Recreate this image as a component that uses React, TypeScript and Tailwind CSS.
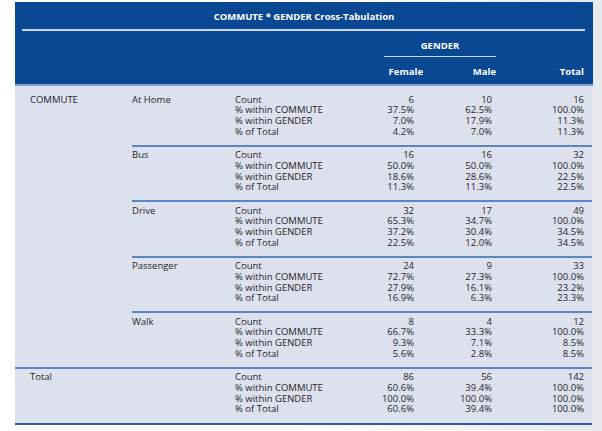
import React from "react";

type Group = { name: string; rows: string[][] };

const labels = ["Count", "% within COMMUTE", "% within GENDER", "% of Total"];

const groups: Group[] = [
  { name: "At Home", rows: [["6", "10", "16"], ["37.5%", "62.5%", "100.0%"], ["7.0%", "17.9%", "11.3%"], ["4.2%", "7.0%", "11.3%"]] },
  { name: "Bus", rows: [["16", "16", "32"], ["50.0%", "50.0%", "100.0%"], ["18.6%", "28.6%", "22.5%"], ["11.3%", "11.3%", "22.5%"]] },
  { name: "Drive", rows: [["32", "17", "49"], ["65.3%", "34.7%", "100.0%"], ["37.2%", "30.4%", "34.5%"], ["22.5%", "12.0%", "34.5%"]] },
  { name: "Passenger", rows: [["24", "9", "33"], ["72.7%", "27.3%", "100.0%"], ["27.9%", "16.1%", "23.2%"], ["16.9%", "6.3%", "23.3%"]] },
  { name: "Walk", rows: [["8", "4", "12"], ["66.7%", "33.3%", "100.0%"], ["9.3%", "7.1%", "8.5%"], ["5.6%", "2.8%", "8.5%"]] },
];

const total: string[][] = [["86", "56", "142"], ["60.6%", "39.4%", "100.0%"], ["100.0%", "100.0%", "100.0%"], ["60.6%", "39.4%", "100.0%"]];

function Stats({ rows }: { rows: string[][] }) {
  return (
    <>
      <div className="w-[105px]">
        {labels.map((l) => (
          <div key={l}>{l}</div>
        ))}
      </div>
      <div className="w-[74px] text-right">
        {rows.map((r, i) => (
          <div key={i}>{r[0]}</div>
        ))}
      </div>
      <div className="w-[78px] text-right">
        {rows.map((r, i) => (
          <div key={i}>{r[1]}</div>
        ))}
      </div>
      <div className="w-[92px] text-right">
        {rows.map((r, i) => (
          <div key={i}>{r[2]}</div>
        ))}
      </div>
    </>
  );
}

export default function App() {
  return (
    <div
      className="w-[602px] h-[431px] overflow-hidden bg-linear-to-r from-white via-white to-[#e6e9ee] pt-[2px]"
      style={{ fontFamily: '"Open Sans", "Noto Sans", sans-serif' }}
    >
      <div className="ml-[15px] w-[578px]">
        {/* Header */}
        <div className="h-[82px] bg-[#0a4894] text-white font-bold flex flex-col">
          <div className="mt-[9px] text-center text-[9.5px] leading-[12px]">COMMUTE * GENDER Cross-Tabulation</div>
          <div className="mt-[6px] ml-[7px] mr-[8px] h-[1.5px] bg-[#c9d8ee]"></div>
          <div className="mt-[9px] ml-[369px] w-[112px] text-center text-[9.5px] leading-[12px]">GENDER</div>
          <div className="mt-[4px] ml-[369px] w-[112px] h-[1.5px] bg-[#c9d8ee]"></div>
          <div className="mt-[9px] flex text-[9.5px] leading-[12px]">
            <div className="w-[345px]"></div>
            <div className="w-[63px] text-right">Female</div>
            <div className="w-[73px] text-right">Male</div>
            <div className="w-[88px] text-right">Total</div>
          </div>
        </div>
        <div className="h-[2px] bg-[#7fa0cf]"></div>
        {/* Body */}
        <div className="w-[577px] bg-[#dde1ee] text-[#262626] text-[9.5px] leading-[10.75px]">
          <div className="flex">
            <div className="w-[117px] pl-[15px] pt-[8.6px]">COMMUTE</div>
            <div className="flex flex-col w-[460px]">
              {groups.map((g, gi) => (
                <div
                  key={g.name}
                  className={
                    gi === 0
                      ? "flex pt-[8.6px] pb-[7px]"
                      : "flex border-t-2 border-[#5b86bf] pt-[3.5px] pb-[7px]"
                  }
                >
                  <div className="w-[103px]">{g.name}</div>
                  <Stats rows={g.rows} />
                </div>
              ))}
            </div>
          </div>
          <div className="flex border-t-2 border-[#5b86bf] pt-[3.5px] pb-[7.6px] border-b-2 border-b-[#2f5e9a]">
            <div className="w-[220px] pl-[15px]">Total</div>
            <Stats rows={total} />
          </div>
        </div>
      </div>
    </div>
  );
}
